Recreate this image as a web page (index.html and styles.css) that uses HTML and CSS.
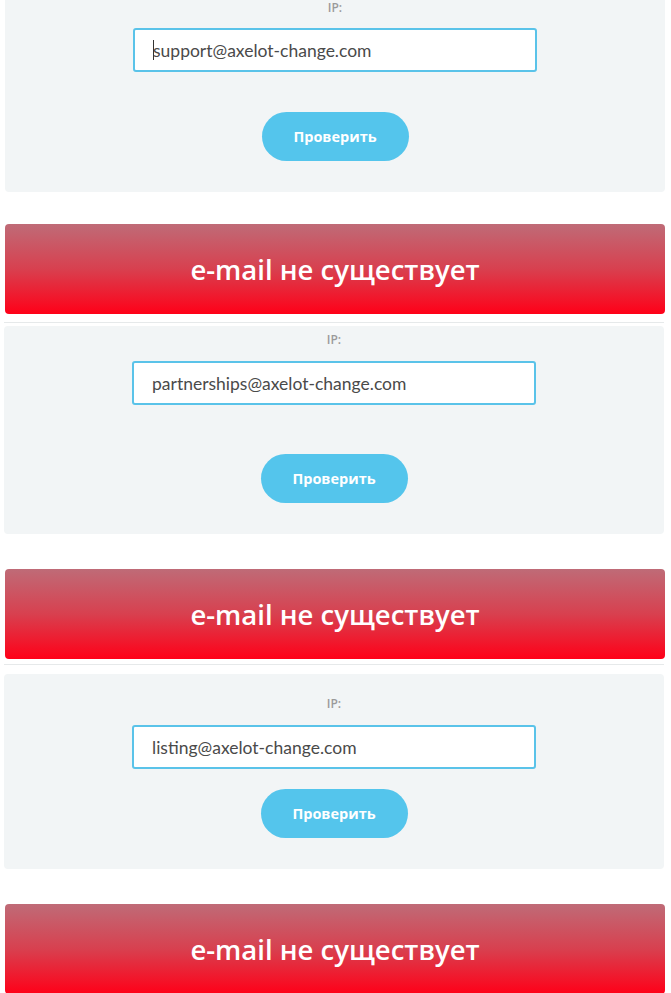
FILE: index.html
```html
<!DOCTYPE html>
<html lang="ru">
<head>
<meta charset="utf-8">
<title>Проверка e-mail</title>
<link rel="stylesheet" href="styles.css">
</head>
<body>
<main class="page">
  <section class="card card--first">
    <div class="label">IP:</div>
    <div class="field"><span class="caret"></span><input class="input" type="text" value="support@axelot-change.com"></div>
    <button class="btn btn--a" type="button">Проверить</button>
  </section>
  <div class="result result--first">e-mail не существует</div>
  <hr class="sep sep--a">

  <section class="card card--second">
    <div class="label">IP:</div>
    <div class="field"><input class="input" type="text" value="partnerships@axelot-change.com"></div>
    <button class="btn btn--b" type="button">Проверить</button>
  </section>
  <div class="result">e-mail не существует</div>
  <hr class="sep sep--b">

  <section class="card card--third">
    <div class="label">IP:</div>
    <div class="field"><input class="input" type="text" value="listing@axelot-change.com"></div>
    <button class="btn btn--c" type="button">Проверить</button>
  </section>
  <div class="result">e-mail не существует</div>
</main>
</body>
</html>
```

FILE: styles.css
```css
* { box-sizing: border-box; }
html, body { margin: 0; padding: 0; background: #ffffff; }
body { font-family: "Lato", "Open Sans", sans-serif; }

.page {
  display: flex;
  flex-direction: column;
  padding: 0 7px 0 4px;
}

.card {
  background: #f2f5f6;
  border-radius: 4px;
  display: flex;
  flex-direction: column;
  align-items: center;
  padding-bottom: 31px;
}
.card--first { padding-top: 1px; margin-left: 1px; margin-right: -1px; border-radius: 0 0 4px 4px; }
.card--first .field { margin-top: 13px; }
.card--second { padding-top: 7px; margin-top: 3px; }
.card--third { padding-top: 23px; margin-top: 9px; }

.label {
  font-family: "Open Sans", sans-serif;
  font-weight: 600;
  font-size: 12px;
  line-height: 14px;
  color: #9a9a9a;
}

.field {
  position: relative;
  margin-top: 14px;
  width: 404px;
}
.input {
  display: block;
  width: 100%;
  height: 44px;
  border: 2px solid #5ac3e9;
  border-radius: 3px;
  background: #ffffff;
  padding: 0 0 0 18px;
  font-family: "Lato", sans-serif;
  font-size: 17.5px;
  color: #4a4a4a;
  outline: none;
}
.caret {
  position: absolute;
  left: 20px;
  top: 12px;
  width: 1px;
  height: 20px;
  background: #333;
}

.btn {
  width: 147px;
  height: 49px;
  border: none;
  border-radius: 25px;
  background: #54c5ec;
  color: #ffffff;
  font-family: "Open Sans", sans-serif;
  font-weight: 700;
  font-size: 14.5px;
  cursor: pointer;
}
.btn--a { margin-top: 40px; }
.btn--b { margin-top: 49px; }
.btn--c { margin-top: 20px; }

.result {
  height: 90px;
  margin-top: 35px;
  margin-left: 1px;
  margin-right: -1px;
  border-radius: 4px;
  background: linear-gradient(to bottom, #bf6b77 0%, #d8404f 50%, #ff0018 100%);
  color: #ffffff;
  font-family: "Open Sans", sans-serif;
  font-weight: 600;
  font-size: 27.5px;
  display: flex;
  align-items: center;
  justify-content: center;
}
.result--first { margin-top: 32px; }

.sep {
  border: none;
  height: 1px;
  background: #e6e9ea;
  margin: 0;
}
.sep--a { margin-top: 8px; }
.sep--b { margin-top: 5px; }
```
